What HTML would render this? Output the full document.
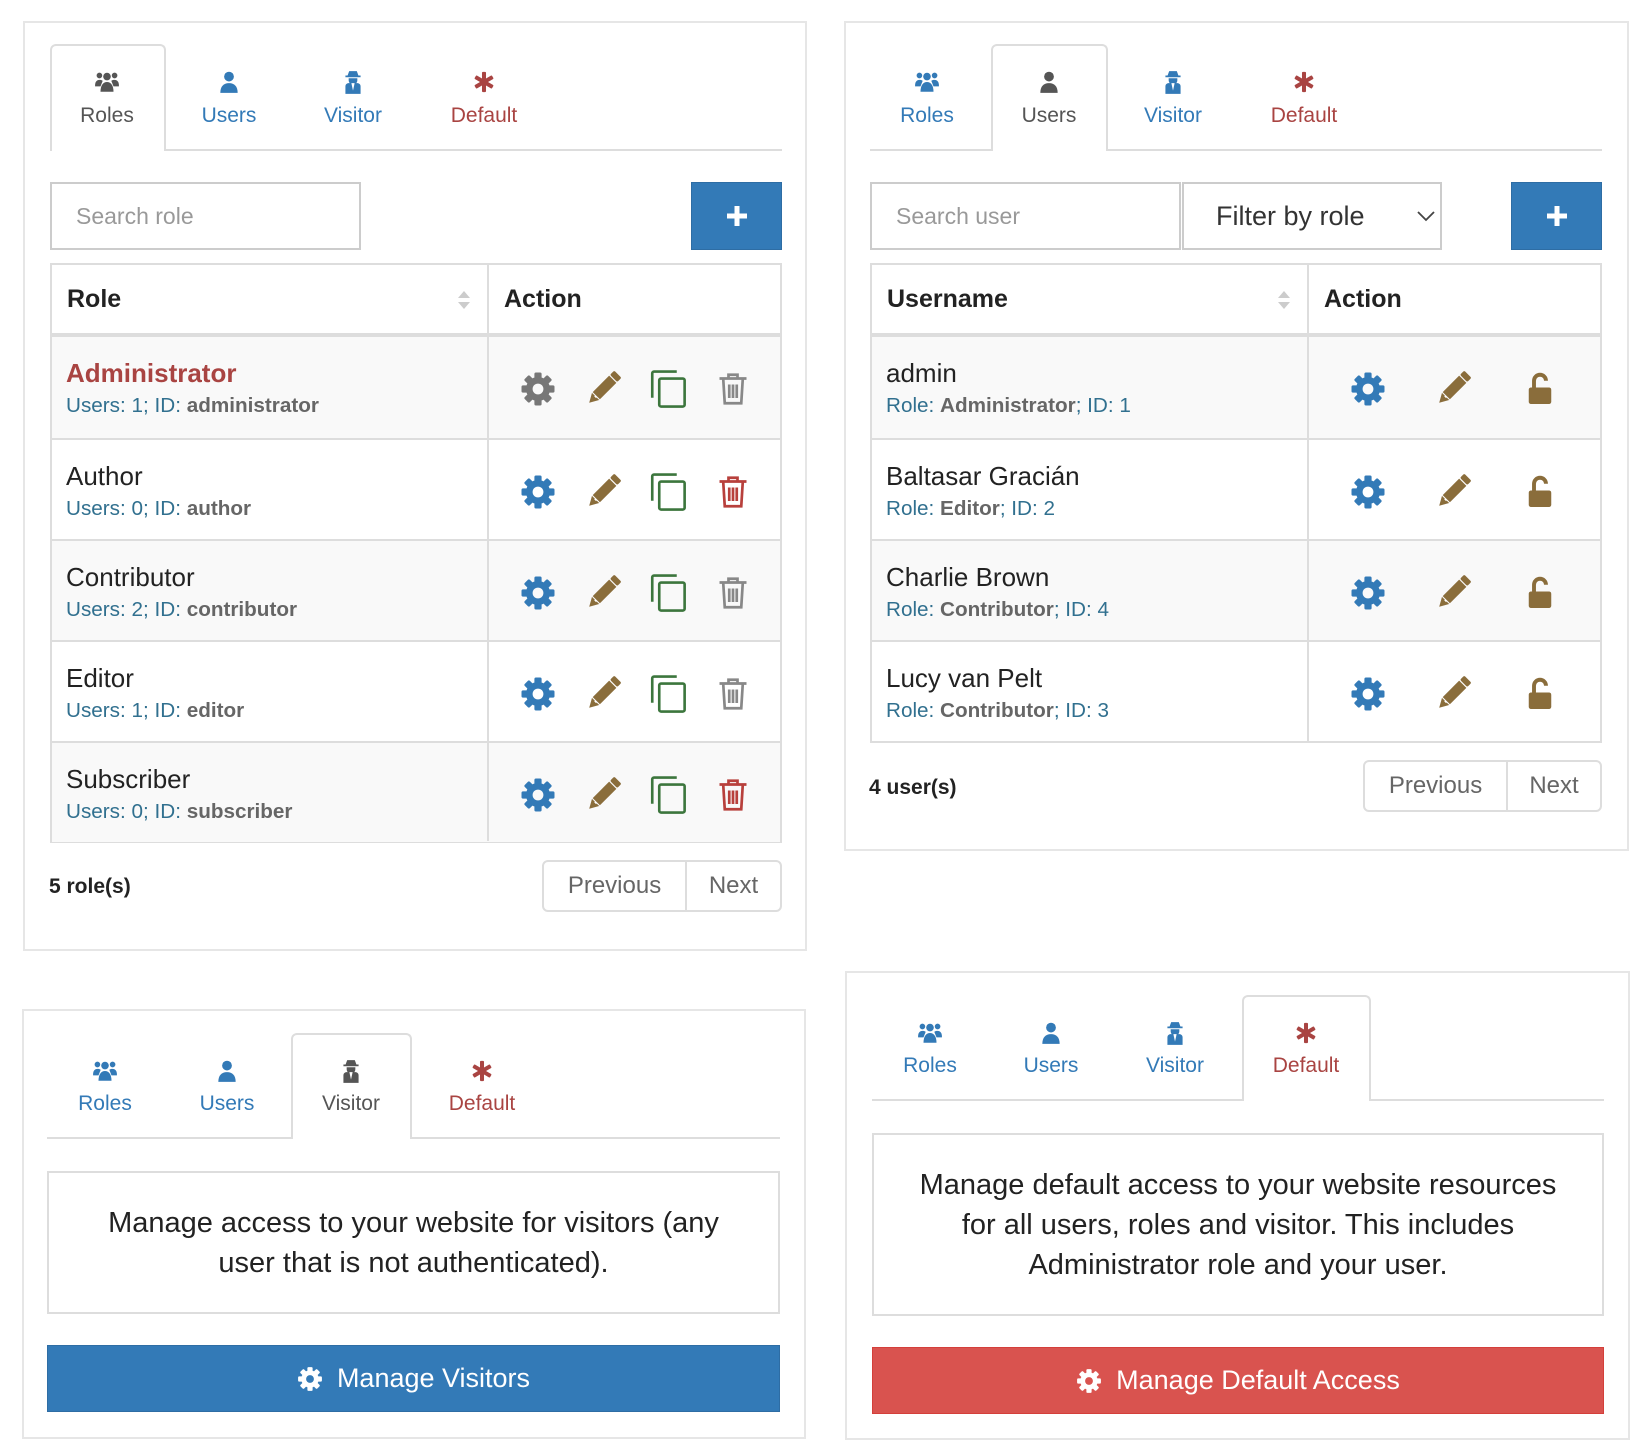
<!DOCTYPE html>
<html><head><meta charset="utf-8">
<style>
*{box-sizing:border-box;margin:0;padding:0}
body{width:1652px;height:1454px;background:#fff;font-family:"Liberation Sans",Arial,sans-serif;position:relative;overflow:hidden;color:#333}
.a{position:absolute}
.panel{position:absolute;border:2px solid #e6e6e6;background:#fff}
.tline{position:absolute;height:2px;background:#ddd}
.tab{position:absolute;border:2px solid #ddd;border-bottom:none;border-radius:6px 6px 0 0;background:#fff}
.tl{position:absolute;width:140px;margin-left:-70px;text-align:center;font-size:21px;line-height:24px}
.ti{position:absolute;width:26px;height:26px;margin-left:-13px;margin-top:-13px}
.blue{color:#337ab7}.red{color:#a94442}.dark{color:#555}
.inp{position:absolute;border:2px solid #ccc;background:#fff;font-size:23px;color:#999;padding-left:24px;display:flex;align-items:center}
.plus{position:absolute;background:#337ab7;border:1px solid #2e6da4;color:#fff;display:flex;align-items:center;justify-content:center}
.tbl{position:absolute;border:2px solid #ddd}
.row{position:absolute;left:0;right:0;height:101px;border-top:2px solid #ddd}
.st{background:#f9f9f9}
.nm{position:absolute;left:14px;top:21px;font-size:26px;line-height:30px;color:#222}
.sb{position:absolute;left:14px;top:57px;font-size:20.7px;line-height:24px;color:#31708f}
.sb b{color:#666}
.ic{position:absolute;width:36px;height:36px;margin-left:-18px;top:34px}
.cp{width:42px;height:42px;margin-left:-21px;top:31px}
.vs{position:absolute;top:0;bottom:0;width:2px;background:#ddd}
.th{position:absolute;font-weight:bold;font-size:25px;line-height:30px;color:#222}
.pg{position:absolute;border:2px solid #ddd;border-radius:6px;display:flex;font-size:24px;color:#666}
.pg div{display:flex;align-items:center;justify-content:center}
.box{position:absolute;border:2px solid #ddd;text-align:center;font-size:29px;line-height:40px;color:#222;display:flex;align-items:center;justify-content:center}
.btn{position:absolute;color:#fff;font-size:27px;display:flex;align-items:center;justify-content:center;gap:14px}
</style></head><body>
<svg width="0" height="0" style="position:absolute">
<defs>
<mask id="gm"><rect x="0" y="0" width="24" height="24" fill="#fff"/><circle cx="12" cy="12" r="3.6" fill="#000"/></mask>
<symbol id="gear" viewBox="0 0 24 24"><g mask="url(#gm)" fill="currentColor"><circle cx="12" cy="12" r="8"/>
<rect x="9.6" y="1" width="4.8" height="22" rx="1"/><rect x="9.6" y="1" width="4.8" height="22" rx="1" transform="rotate(45 12 12)"/><rect x="9.6" y="1" width="4.8" height="22" rx="1" transform="rotate(90 12 12)"/><rect x="9.6" y="1" width="4.8" height="22" rx="1" transform="rotate(135 12 12)"/></g></symbol>
<symbol id="pencil" viewBox="0 0 24 24"><g transform="rotate(45 12 12)" fill="currentColor"><rect x="8.6" y="-2" width="6.8" height="4" rx="1"/><rect x="8.6" y="2.8" width="6.8" height="15.5"/><path d="M8.6 19h6.8l-3.4 6z"/></g><path d="M6.5 16.5l1.2 1.2" stroke="#fff" stroke-width="1"/></symbol>
<symbol id="copy" viewBox="0 0 24 24"><g fill="none" stroke="currentColor" stroke-width="1.5"><path d="M3 17V3a1 1 0 0 1 1-1h13"/><rect x="7" y="6" width="14.5" height="16" rx="1"/></g></symbol>
<symbol id="trash" viewBox="0 0 24 24"><g fill="none" stroke="currentColor" stroke-width="1.8"><path d="M3 5h18M9 5V2.5h6V5M5.5 5.5l1 16h11l1-16"/><path d="M9.5 9v9M12 9v9M14.5 9v9"/></g></symbol>
<symbol id="lock" viewBox="0 0 24 24"><path d="M8 11V6.5a4 4 0 0 1 8 0" fill="none" stroke="currentColor" stroke-width="2.6"/><rect x="4.5" y="11" width="15" height="11" rx="1.5" fill="currentColor"/></symbol>
<symbol id="users" viewBox="0 0 24 24" fill="currentColor"><circle cx="5" cy="6" r="2.6"/><circle cx="19" cy="6" r="2.6"/><circle cx="12" cy="7" r="3.5"/><path d="M1 15c0-3 1.5-5 4-5s3 1 3 1l-2 5H1z"/><path d="M23 15c0-3-1.5-5-4-5s-3 1-3 1l2 5h5z"/><path d="M6 21c0-6 2.5-9 6-9s6 3 6 9z"/></symbol>
<symbol id="user" viewBox="0 0 24 24" fill="currentColor"><circle cx="12" cy="7" r="4.5"/><path d="M4 22c0-6 3-9 8-9s8 3 8 9z"/></symbol>
<symbol id="spy" viewBox="0 0 24 24" fill="currentColor"><path d="M7 6l1.5-4h7L17 6z"/><rect x="5" y="6" width="14" height="1.6"/><path d="M8 8.5h8v2a4 4 0 0 1-8 0z"/><path d="M5 23v-7c0-2 1.5-3 3-3h8c1.5 0 3 1 3 3v7z"/><path d="M10.5 13l1.5 7 1.5-7z" fill="#fff"/></symbol>
<symbol id="ast" viewBox="0 0 24 24" fill="currentColor"><rect x="9.8" y="1" width="4.4" height="22" rx="1"/><rect x="9.8" y="1" width="4.4" height="22" rx="1" transform="rotate(60 12 12)"/><rect x="9.8" y="1" width="4.4" height="22" rx="1" transform="rotate(120 12 12)"/></symbol>
</defs></svg>

<!-- PANEL 1: Roles -->
<div class="panel" style="left:23px;top:21px;width:784px;height:930px"></div>
<div class="tline" style="left:50px;top:149px;width:732px"></div>
<div class="tab" style="left:50px;top:44px;width:116px;height:107px"></div>
<svg class="ti dark" style="left:107px;top:82px"><use href="#users"/></svg><div class="tl dark" style="left:107px;top:104px">Roles</div>
<svg class="ti blue" style="left:229px;top:82px"><use href="#user"/></svg><div class="tl blue" style="left:229px;top:104px">Users</div>
<svg class="ti blue" style="left:353px;top:82px"><use href="#spy"/></svg><div class="tl blue" style="left:353px;top:104px">Visitor</div>
<svg class="ti red" style="left:484px;top:82px;width:22px;height:22px;margin-left:-11px;margin-top:-11px"><use href="#ast"/></svg><div class="tl red" style="left:484px;top:104px">Default</div>

<div class="inp" style="left:50px;top:182px;width:311px;height:68px">Search role</div>
<div class="plus" style="left:691px;top:182px;width:91px;height:68px"><svg width="26" height="26" viewBox="0 0 26 26"><path d="M13 3v20M3 13h20" stroke="#fff" stroke-width="5"/></svg></div>

<div class="tbl" style="left:50px;top:263px;width:732px;height:580px">
 <div class="th" style="left:15px;top:19px">Role</div>
 <svg class="a" style="left:404px;top:23px" width="16" height="24"><path d="M2 10L8 3l6 7z M2 14l6 7 6-7z" fill="#ccc"/></svg>
 <div class="th" style="left:452px;top:19px">Action</div>
 <div class="a" style="left:0;right:0;top:68px;height:4px;background:#ddd"></div>
 <div class="row st" style="top:72px;height:101px;border-top:none"><div class="nm" style="color:#a94442;font-weight:bold">Administrator</div><div class="sb">Users: 1; ID: <b>administrator</b></div>
  <svg class="ic" style="left:486px;color:#777"><use href="#gear"/></svg><svg class="ic" style="left:551px;color:#8a6d3b"><use href="#pencil"/></svg><svg class="ic cp" style="left:616px;color:#3c763d"><use href="#copy"/></svg><svg class="ic" style="left:681px;color:#888"><use href="#trash"/></svg></div>
 <div class="row" style="top:173px"><div class="nm">Author</div><div class="sb">Users: 0; ID: <b>author</b></div>
  <svg class="ic" style="left:486px;color:#337ab7"><use href="#gear"/></svg><svg class="ic" style="left:551px;color:#8a6d3b"><use href="#pencil"/></svg><svg class="ic cp" style="left:616px;color:#3c763d"><use href="#copy"/></svg><svg class="ic" style="left:681px;color:#b8403c"><use href="#trash"/></svg></div>
 <div class="row st" style="top:274px"><div class="nm">Contributor</div><div class="sb">Users: 2; ID: <b>contributor</b></div>
  <svg class="ic" style="left:486px;color:#337ab7"><use href="#gear"/></svg><svg class="ic" style="left:551px;color:#8a6d3b"><use href="#pencil"/></svg><svg class="ic cp" style="left:616px;color:#3c763d"><use href="#copy"/></svg><svg class="ic" style="left:681px;color:#888"><use href="#trash"/></svg></div>
 <div class="row" style="top:375px"><div class="nm">Editor</div><div class="sb">Users: 1; ID: <b>editor</b></div>
  <svg class="ic" style="left:486px;color:#337ab7"><use href="#gear"/></svg><svg class="ic" style="left:551px;color:#8a6d3b"><use href="#pencil"/></svg><svg class="ic cp" style="left:616px;color:#3c763d"><use href="#copy"/></svg><svg class="ic" style="left:681px;color:#888"><use href="#trash"/></svg></div>
 <div class="row st" style="top:476px"><div class="nm">Subscriber</div><div class="sb">Users: 0; ID: <b>subscriber</b></div>
  <svg class="ic" style="left:486px;color:#337ab7"><use href="#gear"/></svg><svg class="ic" style="left:551px;color:#8a6d3b"><use href="#pencil"/></svg><svg class="ic cp" style="left:616px;color:#3c763d"><use href="#copy"/></svg><svg class="ic" style="left:681px;color:#b8403c"><use href="#trash"/></svg></div>
 <div class="vs" style="left:435px"></div>
</div>
<div class="a" style="left:49px;top:875px;font-size:21px;font-weight:bold;color:#222">5 role(s)</div>
<div class="pg" style="left:542px;top:860px;width:240px;height:52px"><div style="width:143px;border-right:2px solid #ddd">Previous</div><div style="flex:1">Next</div></div>

<!-- PANEL 2: Users -->
<div class="panel" style="left:844px;top:21px;width:785px;height:830px"></div>
<div class="tline" style="left:870px;top:149px;width:732px"></div>
<div class="tab" style="left:991px;top:44px;width:117px;height:107px"></div>
<svg class="ti blue" style="left:927px;top:82px"><use href="#users"/></svg><div class="tl blue" style="left:927px;top:104px">Roles</div>
<svg class="ti dark" style="left:1049px;top:82px"><use href="#user"/></svg><div class="tl dark" style="left:1049px;top:104px">Users</div>
<svg class="ti blue" style="left:1173px;top:82px"><use href="#spy"/></svg><div class="tl blue" style="left:1173px;top:104px">Visitor</div>
<svg class="ti red" style="left:1304px;top:82px;width:22px;height:22px;margin-left:-11px;margin-top:-11px"><use href="#ast"/></svg><div class="tl red" style="left:1304px;top:104px">Default</div>

<div class="inp" style="left:870px;top:182px;width:311px;height:68px">Search user</div>
<div class="inp" style="left:1182px;top:182px;width:260px;height:68px;color:#333;font-size:27px;padding-left:32px">Filter by role</div>
<svg class="a" style="left:1416px;top:209px" width="20" height="14"><path d="M2 3l8 8 8-8" fill="none" stroke="#444" stroke-width="1.8"/></svg>
<div class="plus" style="left:1511px;top:182px;width:91px;height:68px"><svg width="26" height="26" viewBox="0 0 26 26"><path d="M13 3v20M3 13h20" stroke="#fff" stroke-width="5"/></svg></div>

<div class="tbl" style="left:870px;top:263px;width:732px;height:480px">
 <div class="th" style="left:15px;top:19px">Username</div>
 <svg class="a" style="left:404px;top:23px" width="16" height="24"><path d="M2 10L8 3l6 7z M2 14l6 7 6-7z" fill="#ccc"/></svg>
 <div class="th" style="left:452px;top:19px">Action</div>
 <div class="a" style="left:0;right:0;top:68px;height:4px;background:#ddd"></div>
 <div class="row st" style="top:72px;border-top:none"><div class="nm">admin</div><div class="sb">Role: <b>Administrator</b>; ID: 1</div>
  <svg class="ic" style="left:496px;color:#337ab7"><use href="#gear"/></svg><svg class="ic" style="left:581px;color:#8a6d3b"><use href="#pencil"/></svg><svg class="ic" style="left:668px;color:#8a6d3b"><use href="#lock"/></svg></div>
 <div class="row" style="top:173px"><div class="nm">Baltasar Gracián</div><div class="sb">Role: <b>Editor</b>; ID: 2</div>
  <svg class="ic" style="left:496px;color:#337ab7"><use href="#gear"/></svg><svg class="ic" style="left:581px;color:#8a6d3b"><use href="#pencil"/></svg><svg class="ic" style="left:668px;color:#8a6d3b"><use href="#lock"/></svg></div>
 <div class="row st" style="top:274px"><div class="nm">Charlie Brown</div><div class="sb">Role: <b>Contributor</b>; ID: 4</div>
  <svg class="ic" style="left:496px;color:#337ab7"><use href="#gear"/></svg><svg class="ic" style="left:581px;color:#8a6d3b"><use href="#pencil"/></svg><svg class="ic" style="left:668px;color:#8a6d3b"><use href="#lock"/></svg></div>
 <div class="row" style="top:375px"><div class="nm">Lucy van Pelt</div><div class="sb">Role: <b>Contributor</b>; ID: 3</div>
  <svg class="ic" style="left:496px;color:#337ab7"><use href="#gear"/></svg><svg class="ic" style="left:581px;color:#8a6d3b"><use href="#pencil"/></svg><svg class="ic" style="left:668px;color:#8a6d3b"><use href="#lock"/></svg></div>
 <div class="vs" style="left:435px"></div>
</div>
<div class="a" style="left:869px;top:776px;font-size:21px;font-weight:bold;color:#222">4 user(s)</div>
<div class="pg" style="left:1363px;top:760px;width:239px;height:52px"><div style="width:143px;border-right:2px solid #ddd">Previous</div><div style="flex:1">Next</div></div>

<!-- PANEL 3: Visitor -->
<div class="panel" style="left:22px;top:1009px;width:784px;height:430px"></div>
<div class="tline" style="left:47px;top:1137px;width:733px"></div>
<div class="tab" style="left:291px;top:1033px;width:121px;height:106px"></div>
<svg class="ti blue" style="left:105px;top:1071px"><use href="#users"/></svg><div class="tl blue" style="left:105px;top:1092px">Roles</div>
<svg class="ti blue" style="left:227px;top:1071px"><use href="#user"/></svg><div class="tl blue" style="left:227px;top:1092px">Users</div>
<svg class="ti dark" style="left:351px;top:1071px"><use href="#spy"/></svg><div class="tl dark" style="left:351px;top:1092px">Visitor</div>
<svg class="ti red" style="left:482px;top:1071px;width:22px;height:22px;margin-left:-11px;margin-top:-11px"><use href="#ast"/></svg><div class="tl red" style="left:482px;top:1092px">Default</div>
<div class="box" style="left:47px;top:1171px;width:733px;height:143px">Manage access to your website for visitors (any<br>user that is not authenticated).</div>
<div class="btn" style="left:47px;top:1345px;width:733px;height:67px;background:#337ab7;border:1px solid #2e6da4"><svg width="26" height="26" style="color:#fff"><use href="#gear"/></svg>Manage Visitors</div>

<!-- PANEL 4: Default -->
<div class="panel" style="left:845px;top:971px;width:785px;height:469px"></div>
<div class="tline" style="left:872px;top:1099px;width:732px"></div>
<div class="tab" style="left:1242px;top:995px;width:129px;height:106px"></div>
<svg class="ti blue" style="left:930px;top:1033px"><use href="#users"/></svg><div class="tl blue" style="left:930px;top:1054px">Roles</div>
<svg class="ti blue" style="left:1051px;top:1033px"><use href="#user"/></svg><div class="tl blue" style="left:1051px;top:1054px">Users</div>
<svg class="ti blue" style="left:1175px;top:1033px"><use href="#spy"/></svg><div class="tl blue" style="left:1175px;top:1054px">Visitor</div>
<svg class="ti red" style="left:1306px;top:1033px;width:22px;height:22px;margin-left:-11px;margin-top:-11px"><use href="#ast"/></svg><div class="tl red" style="left:1306px;top:1054px">Default</div>
<div class="box" style="left:872px;top:1133px;width:732px;height:183px">Manage default access to your website resources<br>for all users, roles and visitor. This includes<br>Administrator role and your user.</div>
<div class="btn" style="left:872px;top:1347px;width:732px;height:67px;background:#d9534f;border:1px solid #d43f3a"><svg width="26" height="26" style="color:#fff"><use href="#gear"/></svg>Manage Default Access</div>
</body></html>
